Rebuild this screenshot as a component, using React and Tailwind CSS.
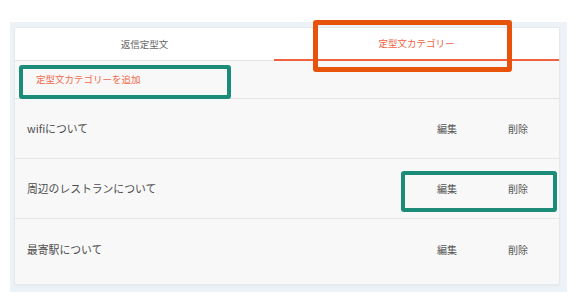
import React from "react";

const font = { fontFamily: '"Noto Sans CJK JP", "Noto Sans", sans-serif' };

function Row({ label, last }) {
  return (
    <div className={`flex items-center h-[60px] pl-[12px] ${last ? "" : "border-b border-[#e6e6e6]"}`}>
      <div className="flex-1 text-[10.8px] text-[#4d4d4d]">{label}</div>
      <div className="flex items-center gap-[11px] pr-[11px]">
        <button className="w-[60px] text-center text-[10px] text-[#555]">編集</button>
        <button className="w-[60px] text-center text-[10px] text-[#555]">削除</button>
      </div>
    </div>
  );
}

export default function App() {
  return (
    <div className="relative w-[579px] h-[308px] bg-white overflow-hidden" style={font}>
      <div className="pt-[22px] pl-[10px]">
        <div className="w-[557px] bg-[#edf2f6] pl-[4px] pr-[7px] pt-[5px] pb-[7px]">
          <div className="bg-[#f8f8f8] border border-[#e4e9ee] rounded-[2px] shadow-[0_1px_2px_rgba(0,0,0,0.04)]">
            <div className="flex h-[33px] bg-white border-b border-[#e3e3e3]">
              <div className="w-[259px] flex items-center justify-center text-[9.5px] text-[#666]">返信定型文</div>
              <div className="flex-1 flex items-center justify-center text-[9.5px] text-[#f2613f] border-b-2 border-[#f2613f] -mb-px">定型文カテゴリー</div>
            </div>
            <div className="h-[38px] flex items-center pl-[21px] border-b border-[#e3e3e3] text-[9.5px] text-[#f2694a]">
              定型文カテゴリーを追加
            </div>
            <Row label="wifiについて" />
            <Row label="周辺のレストランについて" />
            <Row label="最寄駅について" last />
            <div className="h-[5px]" />
          </div>
        </div>
      </div>
      <div className="absolute left-[313px] top-[20px] w-[199px] h-[52px] border-[5px] border-[#e8530c] rounded-[3px]" />
      <div className="absolute left-[19px] top-[65px] w-[212px] h-[34px] border-[4px] border-[#1b8c78] rounded-[3px]" />
      <div className="absolute left-[401px] top-[171px] w-[156px] h-[41px] border-[4px] border-[#1b8c78] rounded-[3px]" />
    </div>
  );
}
